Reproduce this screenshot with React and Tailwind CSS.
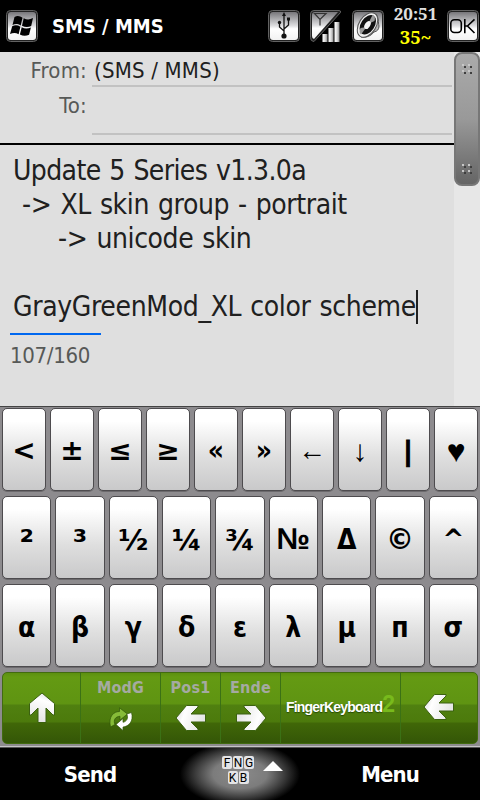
const WIDE = "font-['DejaVu_Sans',sans-serif]";
const THIN = "font-['Liberation_Sans',sans-serif] font-normal";
const TAHOMA = "font-['DejaVu_Sans_Condensed','DejaVu_Sans',sans-serif]";

const topKeys = [
  { char: '<', style: WIDE },
  { char: '±', style: WIDE },
  { char: '≤', style: WIDE },
  { char: '≥', style: WIDE },
  { char: '«' },
  { char: '»' },
  { char: '←', style: `${THIN} text-[28px]` },
  { char: '↓', style: `${THIN} text-[30px]` },
  { char: '|', style: `${WIDE} text-[26px] [-webkit-text-stroke:1px_black]` },
  { char: '♥', style: "font-['Liberation_Sans',sans-serif] text-[32px]" },
];
const midKeys = [
  { char: '²', style: `${WIDE} pt-1 text-[33px]` },
  { char: '³', style: `${WIDE} pt-1 text-[33px]` },
  { char: '½', style: `${WIDE} pt-0.5 text-[29px]` },
  { char: '¼', style: `${WIDE} pt-0.5 text-[29px]` },
  { char: '¾', style: `${WIDE} pt-0.5 text-[29px]` },
  { char: '№', style: "font-['Liberation_Sans',sans-serif] text-[30px]" },
  { char: 'Δ', style: 'pt-0.5' },
  { char: '©', style: `${WIDE} pt-0.5` },
  { char: '^', style: `${WIDE} text-[26px]` },
];
const greekKeys = ['α', 'β', 'γ', 'δ', 'ε', 'λ', 'μ', 'п', 'σ'].map((char) => ({ char, style: 'pt-0.5' }));

function IconTile({ children }) {
  return (
    <svg width="32" height="32" viewBox="0 0 32 32">
      <defs>
        <linearGradient id="tile" x1="0" y1="0" x2="0" y2="1">
          <stop offset="0" stopColor="#77767a" />
          <stop offset="0.5" stopColor="#e0e0e2" />
          <stop offset="0.6" stopColor="#ffffff" />
          <stop offset="1" stopColor="#f2f2f2" />
        </linearGradient>
      </defs>
      <rect x="0.5" y="0.5" width="31" height="31" rx="4" fill="#222" stroke="#626262" />
      <rect x="2" y="2" width="28" height="28" rx="3" fill="url(#tile)" />
      {children}
    </svg>
  );
}

function WindowsIcon() {
  return (
    <IconTile>
      <path d="M8.500 7c3-1.800 5.500-1 8 .8l-1.800 7.700c-3-1.800-5.500-1.800-8.200-.5z" fill="#000" />
      <path d="M17.700 8.200c3.500 1.800 6 1.500 9.300-.2l-1.800 8c-3 1.500-6 1.500-9.200-.2z" fill="#000" />
      <path d="M6.200 16.300c2.800-1.500 5.300-1.300 8.200.4l-1.800 7.500c-3-1.800-5.500-1.500-8.600-.2z" fill="#000" />
      <path d="M15.700 17.200c3 1.600 6 1.500 9.200.2l-1.800 7.300c-3 1.500-6 1.500-9.200-.1z" fill="#000" />
    </IconTile>
  );
}

function UsbIcon() {
  return (
    <IconTile>
      <g fill="none" stroke="#111" strokeWidth="1.300">
        <path d="M16 5v20M16 21l-4.500-4v-4M16 19l4.500-4v-5" />
      </g>
      <path d="M16 2l2 4h-4z" fill="#111" />
      <circle cx="16" cy="26" r="2.600" fill="#111" />
      <circle cx="11.500" cy="12.500" r="1.700" fill="#111" />
      <rect x="19" y="7.500" width="3" height="3" fill="#111" />
    </IconTile>
  );
}

function SignalIcon() {
  return (
    <svg width="32" height="32" viewBox="0 0 32 32">
      <defs>
        <linearGradient id="bar" x1="0" y1="0" x2="1" y2="0">
          <stop offset="0" stopColor="#fff" />
          <stop offset="0.5" stopColor="#ddd" />
          <stop offset="1" stopColor="#8a8a8a" />
        </linearGradient>
      </defs>
      <path d="M4 .5h25q2 0 1.500 2L4 31.500q-3.500 0-3.500-4V4q0-3.500 3.500-3.500z" fill="#222" stroke="#626262" />
      <path d="M5 2h23L4 29q-2-.5-2-3V5q0-3 3-3z" fill="url(#tile)" />
      <path d="M4.500 3.500h11.500l-6 6zM10 9.500v6" fill="none" stroke="#333" strokeWidth="1.200" />
      <rect x="12.500" y="24" width="5" height="8" fill="url(#bar)" />
      <rect x="18.500" y="18" width="5" height="14" fill="url(#bar)" />
      <rect x="24.500" y="12" width="5" height="20" fill="url(#bar)" />
    </svg>
  );
}

function SpeakerIcon() {
  return (
    <IconTile>
      <path d="M24 4c3 4 2 8 3 12q0 5-5 6c-3 4-8 6-13 5z" fill="#b5b5b5" stroke="#555" />
      <ellipse cx="15.500" cy="15" rx="8.500" ry="13.500" transform="rotate(33 15.500 15)" fill="#f0f0f0" stroke="#555" />
      <ellipse cx="15.800" cy="14.700" rx="6.800" ry="10.800" transform="rotate(33 15.800 14.700)" fill="#111" />
      <path d="M16 14l4.500-9q3.500 1 2 6zM14.500 17l-5.500 7.500q-2.500-2-.5-6.500z" fill="#999" />
      <ellipse cx="15.500" cy="15" rx="2.600" ry="4.400" transform="rotate(33 15.500 15)" fill="#f5f5f5" />
    </IconTile>
  );
}

function OkIcon() {
  return (
    <IconTile>
      <rect x="3.800" y="9.800" width="10.500" height="12.700" rx="3.500" fill="none" stroke="#000" strokeWidth="1.600" />
      <path d="M17.800 9v14.300M27.500 9.300l-7 6.700 7 7M18 16h3" fill="none" stroke="#000" strokeWidth="1.600" />
    </IconTile>
  );
}

function Grip() {
  return (
    <svg width="12" height="12" viewBox="0 0 12 12">
      <path d="M1 1h2v2H1zM7 1h2v2H7zM1 7h2v2H1zM7 7h2v2H7z" fill="#c8c8c8" />
      <path d="M3 3h2v2H3zM9 3h2v2H9zM3 9h2v2H3zM9 9h2v2H9z" fill="#3e3e3e" />
    </svg>
  );
}

function Arrow({ className }) {
  return (
    <svg width="32" height="32" viewBox="0 0 32 32" className={className}>
      <defs>
        <linearGradient id="arrow" x1="0" y1="0" x2="1" y2="0.300">
          <stop offset="0" stopColor="#d4d4d4" />
          <stop offset="0.350" stopColor="#fff" />
          <stop offset="1" stopColor="#e6e6e6" />
        </linearGradient>
      </defs>
      <path
        d="M1 16L11.500 3.500H23v1.500l-7 7h14.500v8H16l7 7v1.500H11.500z"
        fill="url(#arrow)"
        stroke="#3b6110"
        strokeWidth="1"
      />
    </svg>
  );
}

function CycleIcon() {
  return (
    <svg width="24" height="24" viewBox="0 0 24 24">
      <path d="M1.500 20C-1 9 5 4.500 10.500 4.500V.8L18.500 7l-7.500 6V9.300C6.500 9.500 4 13 6 17.500z" fill="#86bb38" stroke="#31560a" strokeWidth=".7" />
      <path d="M22.500 5.500c2.500 9-3 14-8.500 14.500v3.500l-7-6 7-6v3.800c4-.8 5.500-4.500 3.800-8.300z" fill="#fff" stroke="#31560a" strokeWidth=".7" />
    </svg>
  );
}

function Key({ char, style = '' }) {
  return (
    <div className="flex h-full min-w-0 items-center justify-center rounded-[5px] border border-[#4d4b4e] bg-linear-to-b from-white from-15% via-[#dedede] via-60% to-[#c9c9ca] pt-[3px] text-[28px] font-bold leading-none text-black shadow-[0_1px_0_#6c6a6d]">
      <span className={style}>{char}</span>
    </div>
  );
}

function StatusBar() {
  return (
    <header className="flex h-[52px] items-center bg-black pl-1.5 text-white">
      <WindowsIcon />
      <h1 className="ml-[14px] flex-1 text-[20px] font-bold">SMS / MMS</h1>
      <div className="flex items-center gap-2.5">
        <UsbIcon />
        <SignalIcon />
        <SpeakerIcon />
      </div>
      <div className="flex w-[63px] flex-col items-center pb-[3px] font-['Noto_Serif','DejaVu_Serif',serif] text-[17px] font-bold leading-[23px]">
        <span className="text-[#e0e0e0]">20:51</span>
        <span className="text-[18.500px] text-[#ffff00]">35~</span>
      </div>
      <div className="mr-[1px]">
        <OkIcon />
      </div>
    </header>
  );
}

function Message() {
  return (
    <main className="flex h-[354px] bg-[#dfdfdf]">
      <div className="w-[454px]">
        <div className="h-[93px] border-b-2 border-black pl-2 text-[22px] tracking-[0.2px]">
          <div className="flex h-[35px]">
            <span className="w-[79px] pt-[2px] text-right text-[#575957]">From:</span>
            <span className="ml-[5px] w-[360px] border-b-2 border-[#c2c2c2] pl-[2px] pt-[2px] text-[#202020]">(SMS / MMS)</span>
          </div>
          <div className="flex h-[48px]">
            <span className="w-[79px] pt-[2px] text-right text-[#575957]">To:</span>
            <span className="ml-[5px] w-[360px] border-b-2 border-[#c2c2c2]" />
          </div>
        </div>
        <div className="whitespace-pre pl-[13px] pt-[9px] text-[28px] leading-[34px] tracking-[-0.400px] text-[#202020] [word-spacing:1.400px]">
          <p className="tracking-[-0.620px]">Update 5 Series v1.3.0a</p>
          <p> -&gt; XL skin group - portrait</p>
          <p>     -&gt; unicode skin</p>
          <p> </p>
          <p className="flex tracking-[-0.350px]">GrayGreenMod_XL color scheme<span className="w-0.5 bg-[#202020]" /></p>
        </div>
        <div className="ml-2.5 mt-[9px] h-0.5 w-[91px] bg-[#0068f0]" />
        <p className="ml-2.5 mt-1 text-[22px] tracking-[-0.300px] text-[#575957]">107/160</p>
      </div>
      <aside className="w-[26px] bg-[#e7e7e7]">
        <div className="flex h-[134px] flex-col items-center justify-between rounded-lg border-2 border-[#777] bg-linear-to-b from-[#aaa] via-[#999] to-[#656565] py-[9px]">
          <Grip />
          <Grip />
        </div>
      </aside>
    </main>
  );
}

function ToolKey({ label, children }) {
  return (
    <div className="flex flex-col items-center border-r border-[#3b7115]">
      <span className="mt-[5px] h-[20px] text-[16px] font-bold leading-[20px] tracking-[0.200px] text-[#a5aaa1]">{label}</span>
      {children}
    </div>
  );
}

function Toolbar() {
  return (
    <div className="mx-0.5 grid h-[72px] grid-cols-[78px_80px_60px_60px_120px_76px] overflow-hidden rounded-[5px] border border-[#426b10] bg-[linear-gradient(#5c9010_0px,#649a13_4px,#5f9412_31px,#508010_32px,#4c7a0c_49px,#406708_50px,#345607_70px)]">
      <ToolKey>
        <Arrow className="-mt-[6px] rotate-90" />
      </ToolKey>
      <ToolKey label="ModG">
        <span className="mt-[9px]"><CycleIcon /></span>
      </ToolKey>
      <ToolKey label="Pos1">
        <Arrow className="mt-1" />
      </ToolKey>
      <ToolKey label="Ende">
        <Arrow className="mt-1 rotate-180" />
      </ToolKey>
      <div className="flex items-baseline justify-center border-r border-[#3b7115] pt-[14px] font-['Liberation_Sans',sans-serif] font-bold">
        <span className="text-[14px] tracking-[-0.800px] text-white [text-shadow:0_1px_1px_#264b00]">FingerKeyboard</span>
        <span className="text-[23px] leading-[34px] text-[#78ba1c]">2</span>
      </div>
      <div className="flex justify-center">
        <Arrow className="mt-[18px]" />
      </div>
    </div>
  );
}

function Keyboard() {
  return (
    <section className="h-[342px] border-y border-t-[#444] border-b-[#555] bg-[#8d8b8e]">
      <div className="grid h-[84px] grid-cols-10 gap-1 px-0.5 pt-px">
        {topKeys.map((k) => <Key key={k.char} {...k} />)}
      </div>
      <div className="mt-[5px] grid h-[83px] grid-cols-9 gap-1 px-0.5">
        {midKeys.map((k) => <Key key={k.char} {...k} />)}
      </div>
      <div className="mt-[5px] grid h-[83px] grid-cols-9 gap-1 px-0.5">
        {greekKeys.map((k) => <Key key={k.char} {...k} />)}
      </div>
      <div className="mt-[5px] border-b border-[#c6c4c7] pb-0.5">
        <Toolbar />
      </div>
    </section>
  );
}

function SipButton() {
  const cap = "flex h-[13px] w-[10px] items-center justify-center rounded-[2px] bg-[#e4e4e6] font-['Roboto',sans-serif] text-[12px] font-normal leading-none tracking-normal text-black";
  return (
    <div className="flex h-full w-[120px] bg-[radial-gradient(ellipse_60px_32px_at_center,#8a8a8a_0%,#7c7c7c_45%,#3a3a3a_75%,#121212_92%,#000_100%)] pl-[42px] pt-2">
      <div className="flex flex-col items-center gap-0.5">
        <div className="flex gap-px">
          <span className={cap}>F</span>
          <span className={cap}>N</span>
          <span className={cap}>G</span>
        </div>
        <div className="flex gap-px">
          <span className={cap}>K</span>
          <span className={cap}>B</span>
        </div>
      </div>
      <svg width="20" height="10" viewBox="0 0 20 10" className="ml-[9px] mt-[5px]">
        <path d="M10 0l10 10H0z" fill="#fff" />
      </svg>
    </div>
  );
}

export default function App() {
  return (
    <div className={`h-[800px] w-[480px] overflow-hidden bg-black ${TAHOMA}`}>
      <StatusBar />
      <Message />
      <Keyboard />
      <footer className="flex h-[52px] items-center justify-between bg-black text-[22px] font-bold tracking-[-0.900px] text-white">
        <span className="w-[180px] text-center">Send</span>
        <SipButton />
        <span className="w-[180px] text-center">Menu</span>
      </footer>
    </div>
  );
}
